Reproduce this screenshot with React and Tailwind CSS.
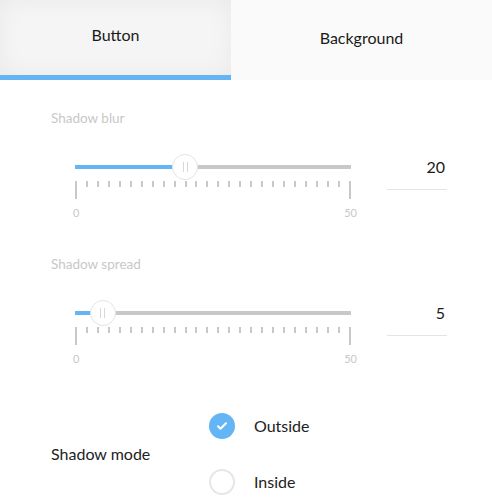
import React, { useState } from 'react';

const TICKS = Array.from({ length: 26 }, (_, i) => i);

function Slider({ label, value, max = 50 }) {
  const pct = (value / max) * 100;
  return (
    <div>
      <p className="m-0 text-[13.5px] leading-[18px] text-[#c8c8c8]">{label}</p>
      <div className="flex items-start mt-[27px]">
        <div className="ml-[24px] w-[276px] shrink-0">
          <div className="relative h-[26px]">
            <div className="absolute left-0 right-0 top-[11px] h-[4px] bg-[#c8c8c8]" />
            <div className="absolute left-0 top-[11px] h-[4px] bg-[#64b5f6]" style={{ width: `${pct}%` }} />
            <div
              className="absolute top-0 w-[26px] h-[26px] rounded-full bg-white border border-[#e4e4e4] flex items-center justify-center gap-[3px]"
              style={{ left: `calc(${pct}% - 13px)` }}
            >
              <span className="w-px h-[10px] bg-[#d8d8d8]" />
              <span className="w-px h-[10px] bg-[#d8d8d8]" />
            </div>
          </div>
          <div className="mt-px flex justify-between items-start h-[18px]">
            {TICKS.map((i) => (
              <span
                key={i}
                className={
                  i === 0 || i === TICKS.length - 1
                    ? 'w-[2px] h-[18px] bg-[#c8c8c8]'
                    : 'w-[2px] h-[6px] bg-[#c8c8c8]'
                }
              />
            ))}
          </div>
          <div className="mt-[7px] flex justify-between text-[11px] leading-[14px] text-[#c8c8c8]">
            <span className="-ml-[2px]">0</span>
            <span className="-mr-[6px]">{max}</span>
          </div>
        </div>
        <div className="ml-[36px] w-[60px] shrink-0 h-[36px] border-b border-[#e4e4e4] text-right pr-[2px] text-[16px] leading-[26px] text-[#1a1a1a]">
          {value}
        </div>
      </div>
    </div>
  );
}

function Radio({ checked, label }) {
  return (
    <div className="flex items-center h-[26px]">
      {checked ? (
        <span className="w-[26px] h-[26px] rounded-full bg-[#64b5f6] flex items-center justify-center">
          <svg width="12" height="12" viewBox="0 0 24 24" fill="none" stroke="white" strokeWidth="4" strokeLinecap="round" strokeLinejoin="round">
            <path d="M4 12.5l5 5L20 6.5" />
          </svg>
        </span>
      ) : (
        <span className="w-[26px] h-[26px] rounded-full border-2 border-[#e6e6e6] bg-white" />
      )}
      <span className="ml-[19px] text-[16px] text-[#222]">{label}</span>
    </div>
  );
}

export default function App() {
  const [tab] = useState('button');

  return (
    <div className="w-[492px] h-[504px] bg-white overflow-hidden font-['Lato','Noto_Sans',sans-serif]">
      <div className="flex h-[80px]">
        <div
          className={`w-[231px] flex items-center justify-center pb-[5px] border-b-[5px] text-[16px] text-[#1a1a1a] ${
            tab === 'button'
              ? 'bg-[#f5f5f5] border-[#64b5f6] shadow-[inset_0_0_24px_rgba(0,0,0,0.05)]'
              : 'bg-[#fafafa] border-transparent'
          }`}
        >
          Button
        </div>
        <div className="flex-1 flex items-center justify-center pb-[5px] bg-[#fafafa] text-[16px] text-[#1a1a1a]">
          Background
        </div>
      </div>

      <div className="pl-[51px] pr-[45px] pt-[29px]">
        <Slider label="Shadow blur" value={20} />
        <div className="mt-[35px]">
          <Slider label="Shadow spread" value={5} />
        </div>

        <div className="mt-[47px] flex items-center">
          <span className="w-[158px] text-[16px] text-[#222]">Shadow mode</span>
          <div className="flex flex-col gap-[30px]">
            <Radio checked label="Outside" />
            <Radio label="Inside" />
          </div>
        </div>
      </div>
    </div>
  );
}
